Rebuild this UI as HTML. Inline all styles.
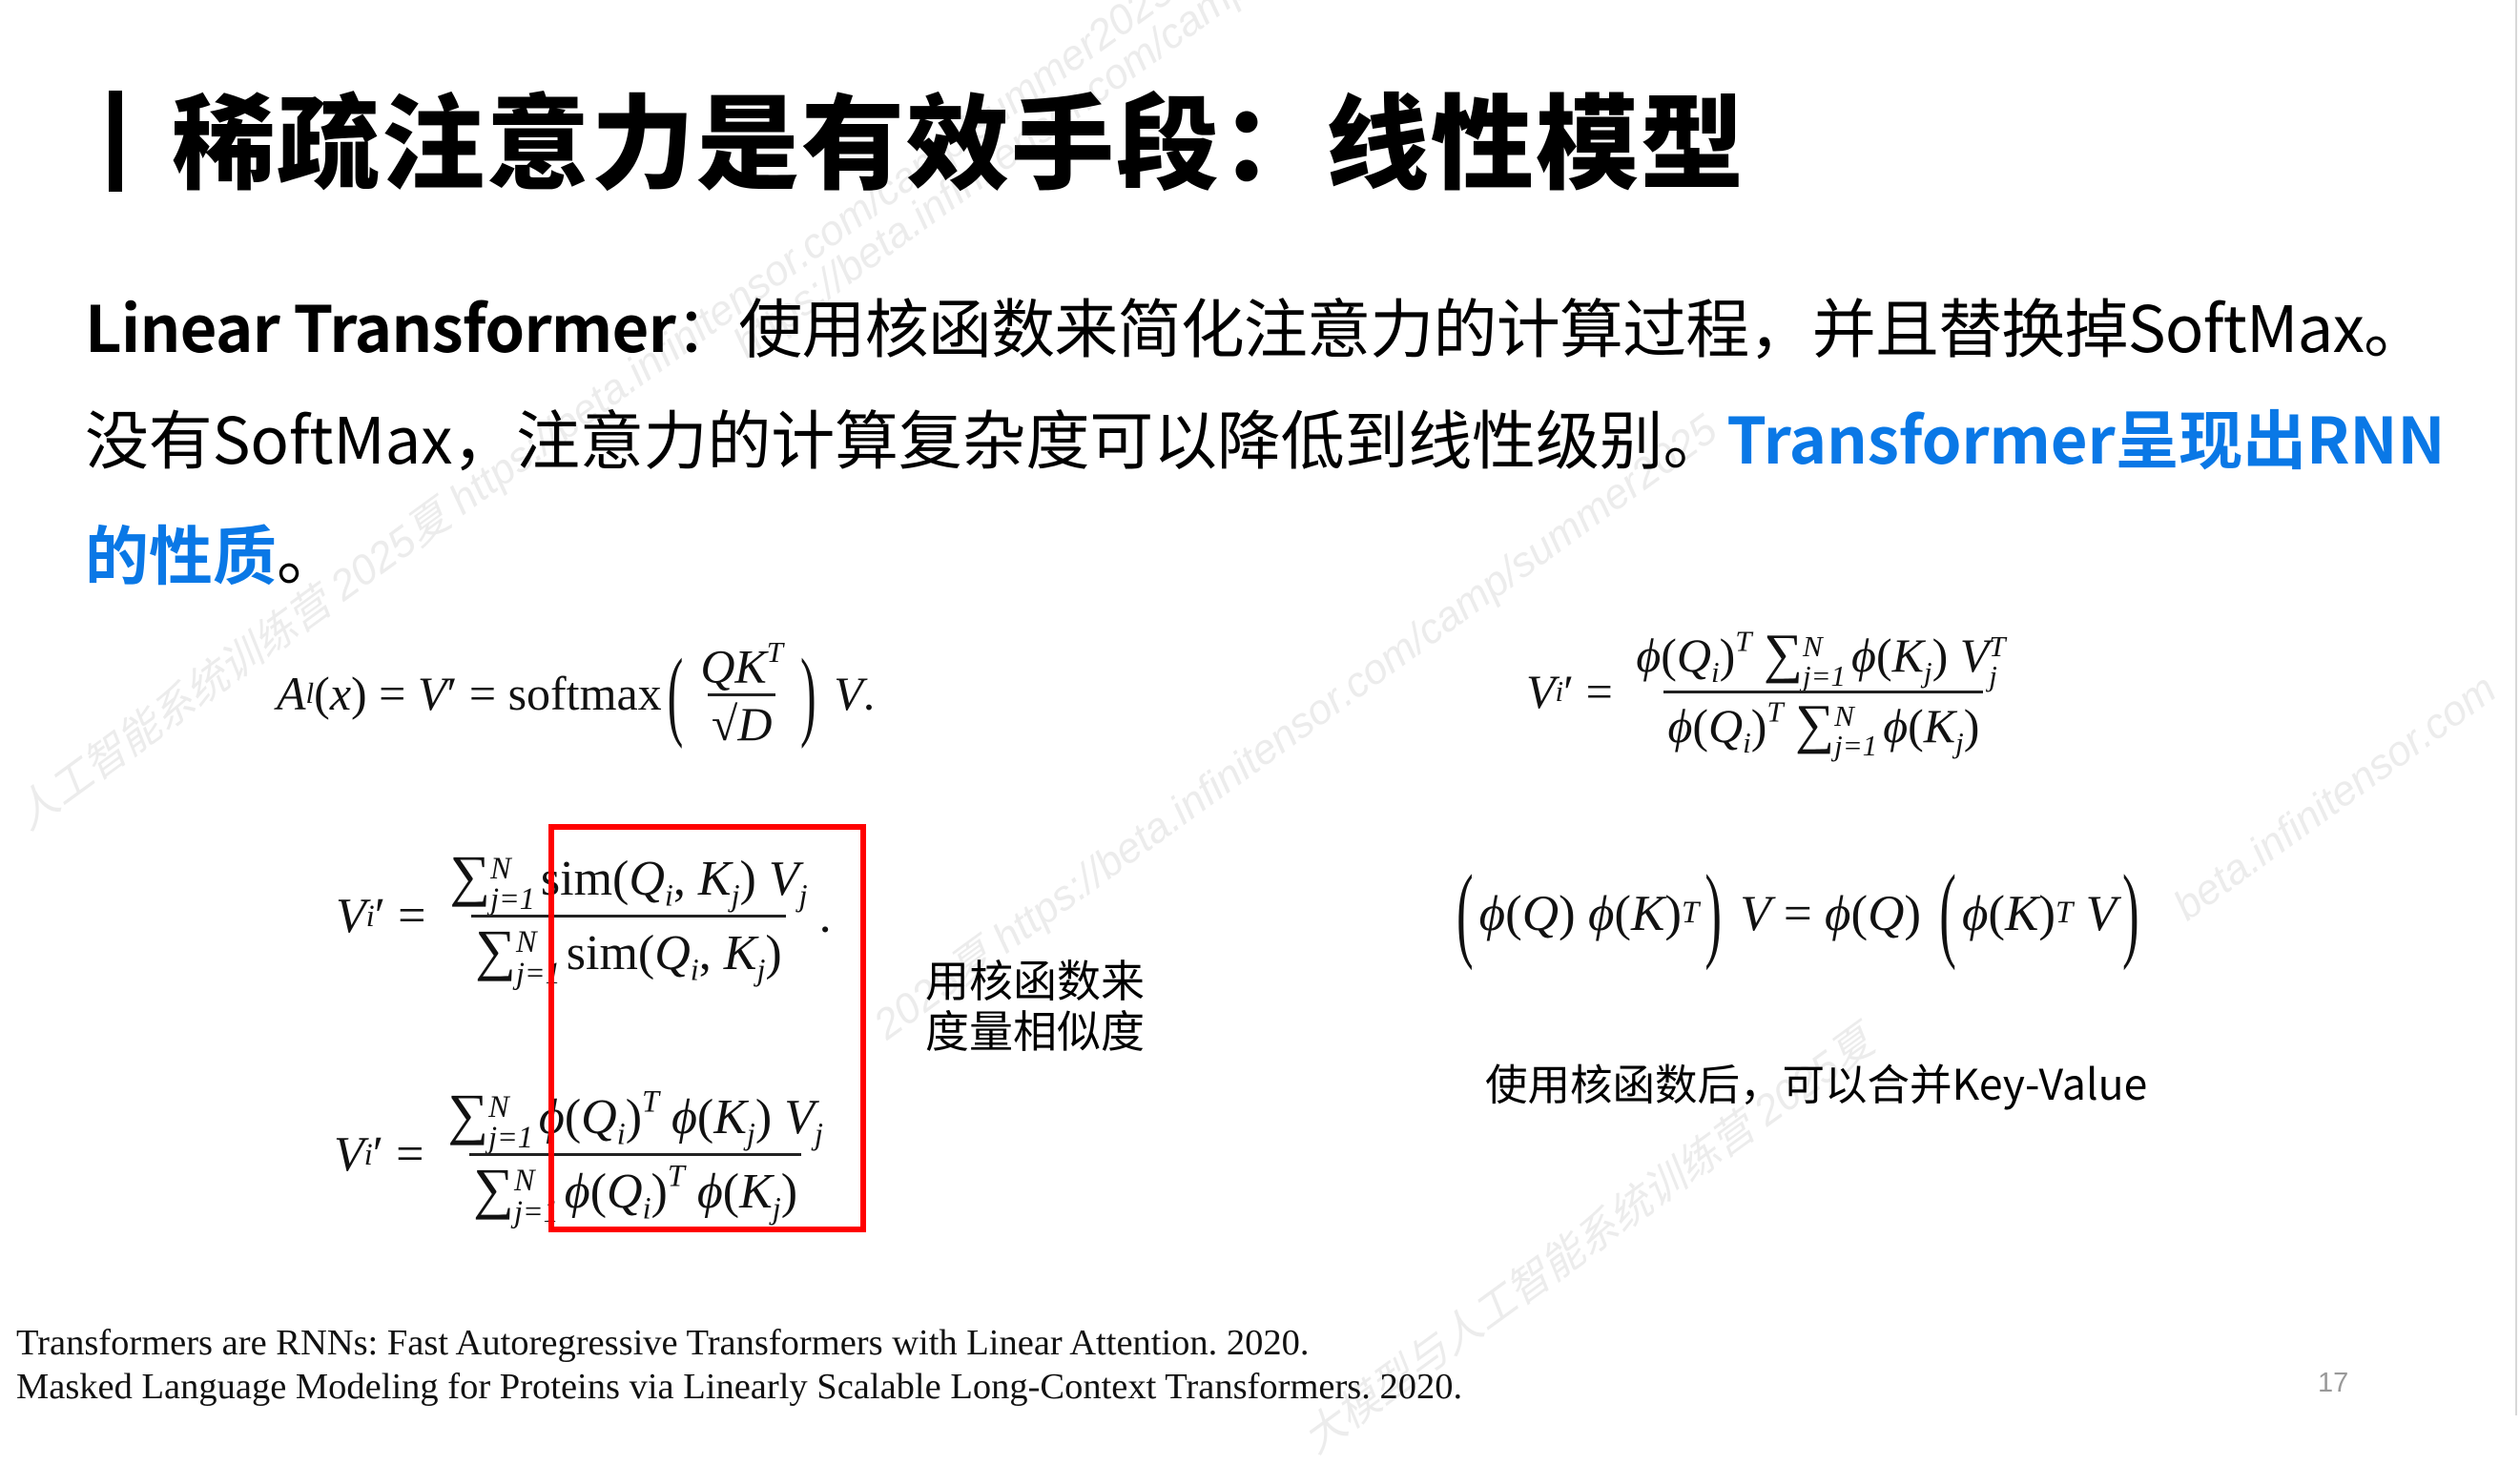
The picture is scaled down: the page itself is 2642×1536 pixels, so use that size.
<!DOCTYPE html>
<html><head><meta charset="utf-8">
<style>
html,body{margin:0;padding:0;background:#fff;}
body{width:2642px;height:1484px;position:relative;overflow:hidden;font-family:"Liberation Sans","Noto Sans CJK SC",sans-serif;}
.abs{position:absolute;white-space:nowrap;}
.cjk{font-family:"Noto Sans CJK SC","Liberation Sans",sans-serif;}
.m{font-family:"Liberation Serif",serif;color:#111;display:flex;align-items:center;}
.m i{font-style:italic;}
.fr{display:inline-flex;flex-direction:column;align-items:center;margin:0 8px;}
.fr>.n{padding:0 4px;}
.fr>.d{border-top:3px solid #222;padding:0 4px;}
.sub{font-size:62%;vertical-align:-0.35em;font-style:italic;}
.sup{font-size:62%;vertical-align:0.7em;font-style:italic;}
.big{display:inline-block;transform:scaleY(2.1);font-weight:100;margin:0 6px;}
.sig{font-size:115%;}
.ss{display:inline-flex;flex-direction:column;font-size:62%;font-style:italic;line-height:1;vertical-align:middle;margin-right:6px;}
.wm{position:absolute;color:#ececec;font-family:"Liberation Sans","Noto Sans CJK SC",sans-serif;font-style:italic;font-size:44px;white-space:nowrap;transform-origin:0 0;}
</style></head><body>

<div class="wm" style="left:760px;top:345px;transform:rotate(-36deg);">https://beta.infinitensor.com/camp/summer2025</div>
<div class="wm" style="left:0px;top:830px;transform:rotate(-36deg);">人工智能系统训练营 2025夏 https://beta.infinitensor.com/camp/summer2025</div>
<div class="wm" style="left:900px;top:1050px;transform:rotate(-36deg);">2025夏 https://beta.infinitensor.com/camp/summer2025</div>
<div class="wm" style="left:2270px;top:935px;transform:rotate(-36deg);">beta.infinitensor.com</div>
<div class="wm" style="left:1350px;top:1484px;transform:rotate(-36deg);">大模型与人工智能系统训练营 2025夏</div>

<div class="abs" style="left:114px;top:95px;width:14px;height:106px;background:#000;"></div>
<div class="abs cjk" style="left:180px;top:68px;font-size:108px;font-weight:900;color:#000;letter-spacing:2px;line-height:150px;">稀疏注意力是有效手段：线性模型</div>

<div class="abs cjk" style="left:89px;top:296px;font-size:67px;line-height:90px;color:#000;letter-spacing:-0.8px;"><b>Linear Transformer</b>：使用核函数来简化注意力的计算过程，并且替换掉SoftMax。</div>
<div class="abs cjk" style="left:89px;top:413px;font-size:67px;line-height:90px;color:#000;letter-spacing:-0.2px;">没有SoftMax，注意力的计算复杂度可以降低到线性级别。<b style="color:#0a78e6;">Transformer呈现出RNN</b></div>
<div class="abs cjk" style="left:89px;top:534px;font-size:67px;line-height:90px;color:#000;"><b style="color:#0a78e6;">的性质</b>。</div>

<!-- formula 1 -->
<div class="abs m" style="left:290px;top:662px;height:130px;font-size:50px;">
<i>A</i><span class="sub">l</span>(<i>x</i>)&nbsp;=&nbsp;<i>V</i>′&nbsp;=&nbsp;softmax<span class="big">(</span><span class="fr"><span class="n"><i>QK</i><span class="sup">T</span></span><span class="d">√<i>D</i></span></span><span class="big">)</span>&nbsp;<i>V</i>.
</div>

<!-- formula top right -->
<div class="abs m" style="left:1600px;top:650px;height:150px;font-size:50px;">
<i>V</i><span class="sub">i</span>′&nbsp;=&nbsp;<span class="fr"><span class="n"><i>ϕ</i>(<i>Q</i><span class="sub">i</span>)<span class="sup">T</span>&nbsp;<span class="sig">∑</span><span class="ss"><span>N</span><span>j=1</span></span><i>ϕ</i>(<i>K</i><span class="sub">j</span>)&nbsp;<i>V</i><span class="ss"><span>T</span><span>j</span></span></span><span class="d"><i>ϕ</i>(<i>Q</i><span class="sub">i</span>)<span class="sup">T</span>&nbsp;<span class="sig">∑</span><span class="ss"><span>N</span><span>j=1</span></span><i>ϕ</i>(<i>K</i><span class="sub">j</span>)</span></span>
</div>

<!-- formula 2 -->
<div class="abs m" style="left:352px;top:885px;height:150px;font-size:52px;">
<i>V</i><span class="sub">i</span>′&nbsp;=&nbsp;<span class="fr"><span class="n"><span class="sig">∑</span><span class="ss"><span>N</span><span>j=1</span></span>sim(<i>Q</i><span class="sub">i</span>, <i>K</i><span class="sub">j</span>)&nbsp;<i>V</i><span class="sub">j</span></span><span class="d"><span class="sig">∑</span><span class="ss"><span>N</span><span>j=1</span></span>sim(<i>Q</i><span class="sub">i</span>, <i>K</i><span class="sub">j</span>)</span></span>.
</div>

<!-- formula 3 -->
<div class="abs m" style="left:350px;top:1135px;height:150px;font-size:52px;">
<i>V</i><span class="sub">i</span>′&nbsp;=&nbsp;<span class="fr"><span class="n"><span class="sig">∑</span><span class="ss"><span>N</span><span>j=1</span></span><i>ϕ</i>(<i>Q</i><span class="sub">i</span>)<span class="sup">T</span>&nbsp;<i>ϕ</i>(<i>K</i><span class="sub">j</span>)&nbsp;<i>V</i><span class="sub">j</span></span><span class="d"><span class="sig">∑</span><span class="ss"><span>N</span><span>j=1</span></span><i>ϕ</i>(<i>Q</i><span class="sub">i</span>)<span class="sup">T</span>&nbsp;<i>ϕ</i>(<i>K</i><span class="sub">j</span>)</span></span>
</div>

<!-- red box -->
<div class="abs" style="left:575px;top:864px;width:321px;height:416px;border:6px solid #f00;"></div>

<div class="abs cjk" style="left:970px;top:1000px;font-size:46px;line-height:53px;color:#000;">用核函数来<br>度量相似度</div>

<!-- formula middle right -->
<div class="abs m" style="left:1521px;top:905px;height:105px;font-size:53px;">
<span class="big">(</span><i>ϕ</i>(<i>Q</i>)&nbsp;<i>ϕ</i>(<i>K</i>)<span class="sup">T</span><span class="big">)</span>&nbsp;<i>V</i>&nbsp;=&nbsp;<i>ϕ</i>(<i>Q</i>)&nbsp;<span class="big">(</span><i>ϕ</i>(<i>K</i>)<span class="sup">T</span>&nbsp;<i>V</i><span class="big">)</span>
</div>

<div class="abs cjk" style="left:1557px;top:1104px;font-size:44.5px;line-height:60px;color:#000;">使用核函数后，可以合并Key-Value</div>

<div class="abs" style="left:17px;top:1385px;font-family:'Liberation Serif',serif;font-size:38.5px;line-height:46px;color:#111;">Transformers are RNNs: Fast Autoregressive Transformers with Linear Attention. 2020.<br>Masked Language Modeling for Proteins via Linearly Scalable Long-Context Transformers. 2020.</div>
<div class="abs" style="left:2430px;top:1434px;font-size:29px;color:#999;">17</div>
<div class="abs" style="left:2637px;top:0;width:2px;height:1484px;background:#d8d8d8;"></div>
</body></html>
